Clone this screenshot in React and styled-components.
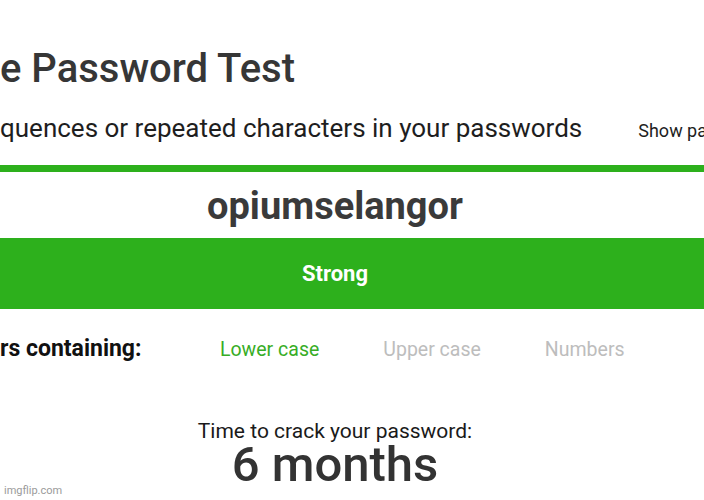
import React from "react";
import styled, { createGlobalStyle } from "styled-components";

const GlobalStyle = createGlobalStyle`
  html, body {
    margin: 0;
    padding: 0;
    background: #ffffff;
    overflow: hidden;
  }
  body {
    font-family: Roboto, "Liberation Sans", sans-serif;
    color: #363636;
  }
`;

const Page = styled.div`
  width: 670px;
  height: 500px;
  display: flex;
  flex-direction: column;
`;

const Title = styled.h1`
  margin: 45px 0 0;
  font-size: 40px;
  line-height: 48px;
  font-weight: 500;
  color: #363636;
  white-space: nowrap;
`;

const SubRow = styled.div`
  display: flex;
  align-items: baseline;
  gap: 56px;
  margin-top: 20px;
  white-space: nowrap;
`;

const Hint = styled.p`
  margin: 0;
  font-size: 26px;
  line-height: 30px;
  color: #1e1e1e;
`;

const ShowToggle = styled.label`
  font-size: 18px;
  color: #1e1e1e;
`;

const StrengthLine = styled.div`
  width: 704px;
  height: 7px;
  margin-top: 22px;
  background: ${(p) => p.color};
`;

const PasswordText = styled.div`
  margin-top: 12px;
  text-align: center;
  font-size: 38px;
  line-height: 44px;
  font-weight: 700;
  color: #3a3a3a;
`;

const StrengthBar = styled.div`
  width: 704px;
  height: 71px;
  margin-top: 10px;
  padding-right: 34px;
  box-sizing: border-box;
  display: flex;
  align-items: center;
  justify-content: center;
  background: ${(p) => p.color};
  color: #ffffff;
  font-size: 22px;
  font-weight: 700;
`;

const CriteriaRow = styled.div`
  display: flex;
  align-items: baseline;
  gap: 64px;
  margin-top: 26px;
  line-height: 28px;
  white-space: nowrap;
`;

const CriteriaLabel = styled.span`
  flex: 0 0 156px;
  font-size: 23px;
  font-weight: 700;
  color: #111111;
`;

const Criterion = styled.span`
  flex: none;
  font-size: 19.5px;
  color: ${(p) => (p.$met ? "#37ad26" : "#bdbdbd")};
`;

const CrackBlock = styled.div`
  margin-top: 55px;
  display: flex;
  flex-direction: column;
  align-items: center;
`;

const CrackLabel = styled.div`
  font-size: 21px;
  line-height: 24px;
  color: #1a1a1a;
`;

const CrackTime = styled.div`
  font-size: 49px;
  line-height: 44px;
  font-weight: 500;
  color: #333333;
`;

const Watermark = styled.span`
  position: absolute;
  left: 4px;
  bottom: 3px;
  font-size: 11px;
  color: #9a9a9a;
`;

const criteria = [
  { name: "Lower case", met: true },
  { name: "Upper case", met: false },
  { name: "Numbers", met: false },
];

export default function App() {
  const green = "#2db01c";
  return (
    <>
      <GlobalStyle />
      <Page>
        <Title>e Password Test</Title>
        <SubRow>
          <Hint>quences or repeated characters in your passwords</Hint>
          <ShowToggle>Show password</ShowToggle>
        </SubRow>
        <StrengthLine color={green} />
        <PasswordText>opiumselangor</PasswordText>
        <StrengthBar color={green}>Strong</StrengthBar>
        <CriteriaRow>
          <CriteriaLabel>rs containing:</CriteriaLabel>
          {criteria.map((c) => (
            <Criterion key={c.name} $met={c.met}>
              {c.name}
            </Criterion>
          ))}
        </CriteriaRow>
        <CrackBlock>
          <CrackLabel>Time to crack your password:</CrackLabel>
          <CrackTime>6 months</CrackTime>
        </CrackBlock>
      </Page>
      <Watermark>imgflip.com</Watermark>
    </>
  );
}
